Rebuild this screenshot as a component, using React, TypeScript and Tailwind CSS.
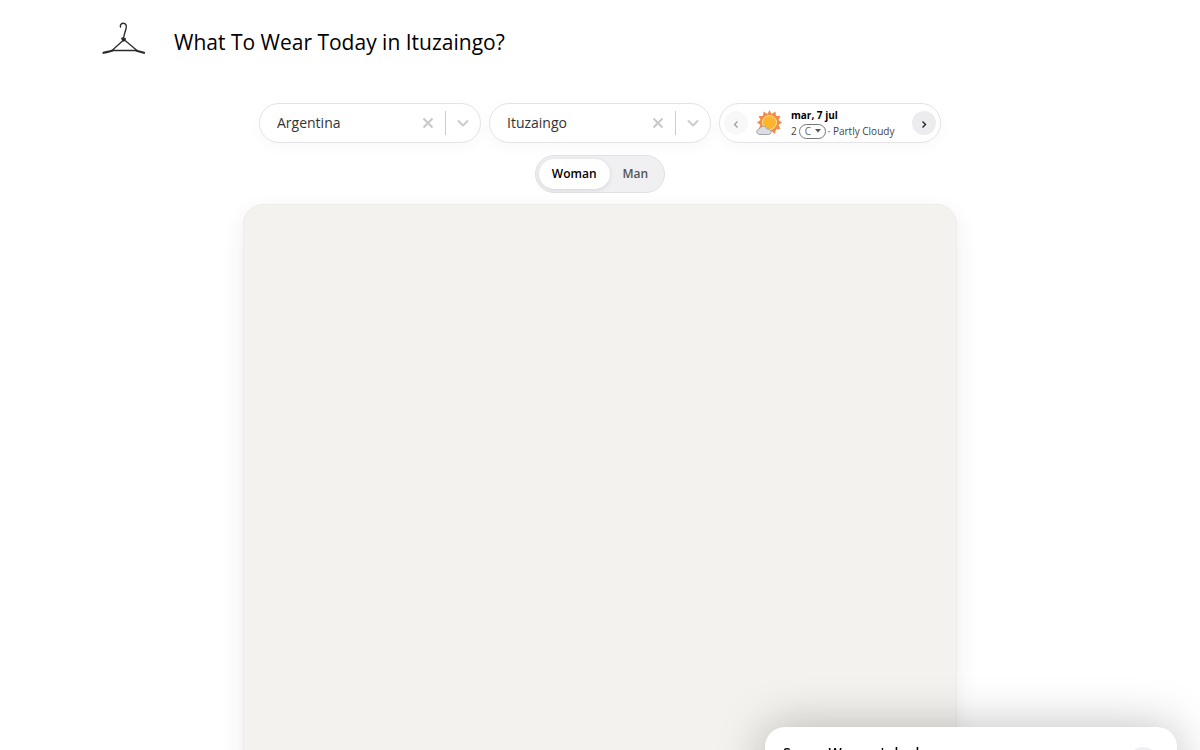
import { useState } from "react";

interface LocationSelectProps {
    label: string
    options: string[]
}

function LocationSelect(props: LocationSelectProps) {
    const [value, setValue] = useState(props.options[0]);

    return (
        <div className="flex h-10 min-w-0 items-center rounded-full border border-[#e4e4e6] bg-white pl-[17px] pr-2 shadow-[0_4px_16px_rgba(0,0,0,0.03)]">
            <select
                aria-label={props.label}
                value={value}
                onChange={(e) => setValue(e.target.value)}
                className="min-w-0 flex-1 appearance-none bg-transparent text-sm text-[#333] outline-none"
            >
                <option value=""></option>
                {props.options.map((o) => <option key={o}>{o}</option>)}
            </select>
            <button aria-label="Clear" onClick={() => setValue("")} className="mr-1 p-1 text-[#c8c8c8]">
                <svg width="18" height="18" viewBox="0 0 18 18" fill="none" stroke="currentColor" strokeWidth="2">
                    <path d="M4.5 4.5l9 9M13.5 4.5l-9 9" />
                </svg>
            </button>
            <span className="h-6 w-px bg-[#ccc]" />
            <svg className="ml-2 text-[#ccc]" width="18" height="18" viewBox="0 0 18 18" fill="none" stroke="currentColor" strokeWidth="2" strokeLinecap="round" strokeLinejoin="round">
                <path d="M4.5 7L9 11.5L13.5 7" />
            </svg>
        </div>
    )
}

function Hanger() {
    return (
        <svg width="44" height="40" viewBox="0 0 44 40" fill="none" stroke="#2b2b2b" strokeLinecap="round" strokeLinejoin="round">
            <path strokeWidth="1.4" d="M18.5 5C17.8 2.5 19.5 1.2 21.5 1.2C24.5 1.2 24.800 4.500 23.800 7.500C22.800 10.500 22 13 21.500 16.500" />
            <path strokeWidth="2.4" d="M20.300 16.500L21.500 18.500L22.800 17" />
            <path strokeWidth="1.3" d="M21 18.500L10 28.500H35L22.500 18" />
            <path strokeWidth="2.200" d="M1.500 30.800C4.500 29.800 7 29.800 10 28.800M34.500 28.800C37 29.500 39.500 29.800 42 30.800" />
        </svg>
    )
}

function PartlyCloudy() {
    return (
        <svg width="28" height="28" viewBox="0 0 28 28">
            <path fill="#f08c45" d="M14.500 1L16.500 5L20.500 2.500L21 7L25.500 7L23.500 11L27 13.500L23.500 16L25.500 20L21 20.500L20 25L16.500 22L14 26L12 22L8 24L8 20L3.500 20L5.500 16L2 13.500L5.500 11L3.500 7L8 7L8.500 2.500L12.500 5Z" />
            <circle cx="14.500" cy="13.500" r="7" fill="#fdb52b" stroke="#ffe2b0" />
            <path fill="#dcdde3" stroke="#a4a5ac" d="M5 25.500C1 25.500 .5 20.500 4.500 20C5.500 16.500 11 16.500 12 20C17 19.500 17.500 25.500 13.500 25.500Z" />
        </svg>
    )
}

function WeatherCard() {
    return (
        <div className="flex h-10 min-w-0 items-center rounded-full border border-[#e4e4e6] bg-white px-1 shadow-[0_4px_16px_rgba(0,0,0,0.03)]">
            <button aria-label="Previous day" disabled className="flex size-6 items-center justify-center rounded-full bg-[#f8f8f9] text-[#999]">
                <svg width="6" height="10" viewBox="0 0 6 10" fill="none" stroke="currentColor" strokeWidth="1.2"><path d="M4.500 3.500L1.500 6.500L4.500 9.500" /></svg>
            </button>
            <span className="ml-[7px]"><PartlyCloudy /></span>
            <div className="ml-2 flex-1 whitespace-nowrap">
                <p className="text-[10px] font-bold leading-4 text-black">mar, 7 jul</p>
                <div className="flex h-4 items-center text-[10px] text-[#444]">
                    <span>2</span>
                    <span className="mx-0.5 flex h-[15px] w-[27px] items-center rounded-full border border-[#777] pl-[5px]">
                        <select aria-label="Unit" className="w-2 appearance-none bg-transparent text-[#666] outline-none">
                            <option>C</option>
                            <option>F</option>
                        </select>
                        <svg className="ml-0.5" width="6" height="4" viewBox="0 0 6 4"><path fill="#555" d="M0 0H6L3 3.500Z" /></svg>
                    </span>
                    <span>· Partly Cloudy</span>
                </div>
            </div>
            <button aria-label="Next day" className="flex size-6 items-center justify-center rounded-full bg-[#ececee] text-[#222]">
                <svg width="6" height="10" viewBox="0 0 6 10" fill="none" stroke="currentColor" strokeWidth="1.400"><path d="M1.500 3.500L4.500 6.500L1.500 9.500" /></svg>
            </button>
        </div>
    )
}

export default function App() {
    const [gender, setGender] = useState("Woman");

    return (
        <div className="h-screen overflow-hidden bg-white font-['Open_Sans','Noto_Sans',sans-serif]">
            <header className="flex items-center gap-7 pl-[102px] pt-[22px]">
                <Hanger />
                <h1 className="text-[21px] leading-10 text-black">What To Wear Today in Ituzaingo?</h1>
            </header>
            <main className="mx-auto flex max-w-[714px] flex-col items-center pt-[41px]">
                <div className="grid w-full grid-cols-3 gap-2 px-4">
                    <LocationSelect label="Country" options={["Argentina"]} />
                    <LocationSelect label="City" options={["Ituzaingo"]} />
                    <WeatherCard />
                </div>
                <div className="mt-3 flex h-[38px] rounded-full border border-[#e2e2e4] bg-[#f0f0f2] p-[3px] text-xs">
                    {["Woman", "Man"].map((g) => (
                        <button
                            key={g}
                            onClick={() => setGender(g)}
                            className={g === gender
                                ? "rounded-full bg-white px-[13px] font-semibold text-black shadow-[0_1px_4px_rgba(0,0,0,0.12)]"
                                : "rounded-full px-[13px] font-semibold text-[#555]"}
                        >
                            {g}
                        </button>
                    ))}
                </div>
                <section className="mt-[11px] h-screen w-full rounded-[20px] border border-[#ededeb] bg-[#f3f2ee] shadow-[0_8px_24px_rgba(0,0,0,0.07)]" />
            </main>
            <aside className="fixed right-[23px] top-[calc(100%-23px)] flex w-[412px] items-start justify-between rounded-[20px] bg-white px-[18px] pb-10 pt-3.5 shadow-[0_0_48px_rgba(0,0,0,0.26)]">
                <h2 className="text-sm font-semibold leading-6 text-black">Sunny Woman's look</h2>
                <button aria-label="Close" className="mt-1.5 size-8 rounded-full bg-[#f0f0f2] text-xs">×</button>
            </aside>
        </div>
    )
}
